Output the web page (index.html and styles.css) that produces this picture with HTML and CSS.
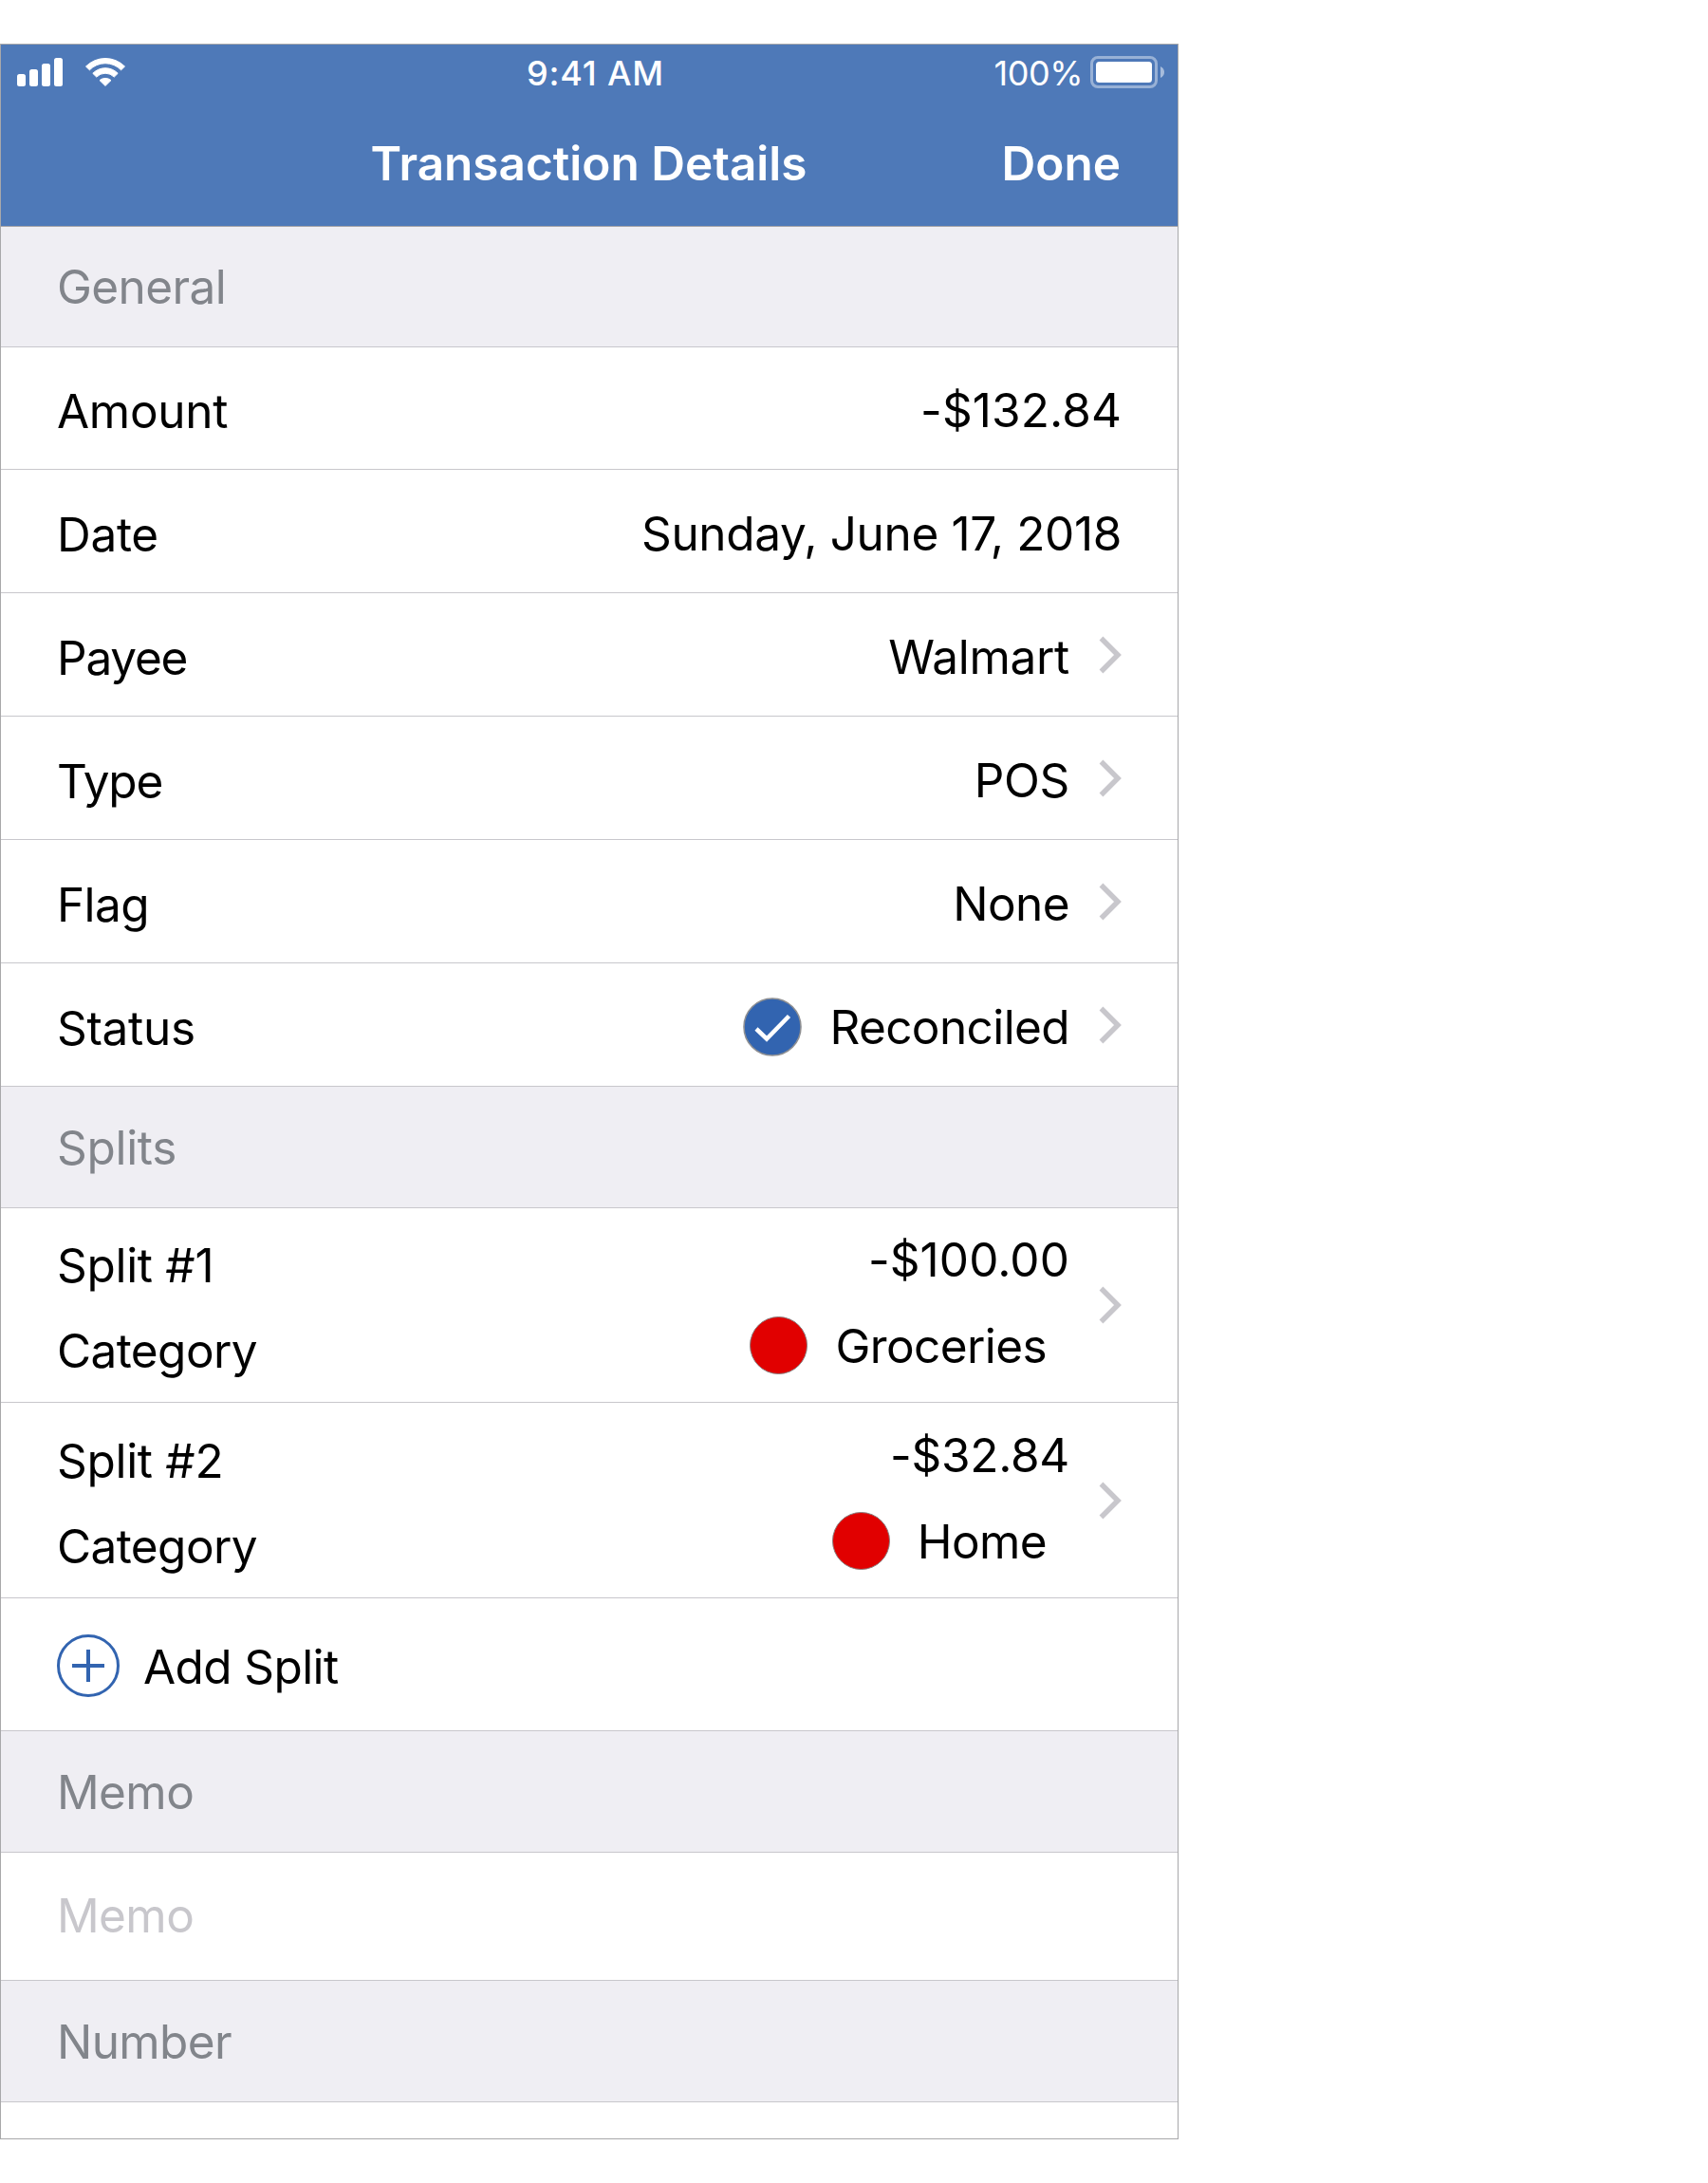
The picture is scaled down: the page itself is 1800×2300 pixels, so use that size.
FILE: index.html
```
<!DOCTYPE html>
<html lang="en">
<head>
    <meta charset="UTF-8">
    <meta name="viewport" content="width=device-width, initial-scale=1.0">
    <title>Transaction Details</title>
    <link rel="stylesheet" href="styles.css">
</head>
<body>
    <div class="phone">
        <header class="header">
            <div class="status-bar">
                <div class="status-left">
                    <svg width="49" height="30" viewBox="0 0 49 30" fill="currentColor">
                        <rect x="0" y="17" width="9" height="13" rx="2.5"></rect>
                        <rect x="13" y="12" width="9" height="18" rx="2.5"></rect>
                        <rect x="26" y="6" width="9" height="24" rx="2.5"></rect>
                        <rect x="39" y="0" width="9" height="30" rx="2.5"></rect>
                    </svg>
                    <svg width="42" height="30" viewBox="0 0 42 30" fill="currentColor" stroke="currentColor" stroke-width="1" stroke-linejoin="round">
                        <path d="M0.5 9 A29 29 0 0 1 41.5 9 L37.6 12.8 A23 23 0 0 0 4.4 12.8 Z"></path>
                        <path d="M7.8 16.3 A18.5 18.5 0 0 1 34.2 16.3 L30.3 20.1 A13 13 0 0 0 11.7 20.1 Z"></path>
                        <path d="M15 23.6 A9.4 9.4 0 0 1 27 23.6 L21 29.4 Z"></path>
                    </svg>
                </div>
                <div class="status-time">9:41 AM</div>
                <div class="status-right">
                    <span>100%</span>
                    <svg width="79" height="34" viewBox="0 0 79 34">
                        <rect x="1.5" y="1.5" width="68" height="31" rx="6.5" fill="none" stroke="#fff" stroke-opacity="0.42" stroke-width="3"></rect>
                        <rect x="6" y="6" width="59" height="22" rx="3.5" fill="#fff"></rect>
                        <path d="M74 11 Q78 13 78 17 Q78 21 74 23 Z" fill="#fff" fill-opacity="0.5"></path>
                    </svg>
                </div>
            </div>
            <div class="nav-bar">
                <h1>Transaction Details</h1>
                <a class="done">Done</a>
            </div>
        </header>

        <h2 class="section first tight">General</h2>
        <div class="row amount">
            <span class="label">Amount</span>
            <span class="value wide">-$132.84</span>
        </div>
        <div class="row">
            <span class="label">Date</span>
            <span class="value date">Sunday, June 17, 2018</span>
        </div>
        <div class="row">
            <span class="label tighter">Payee</span>
            <span class="value">Walmart</span>
            <svg class="chevron" viewBox="0 0 24 40"><path d="M2.5 2.5 L20 20 L2.5 37.5"></path></svg>
        </div>
        <div class="row">
            <span class="label tighter">Type</span>
            <span class="value">POS</span>
            <svg class="chevron" viewBox="0 0 24 40"><path d="M2.5 2.5 L20 20 L2.5 37.5"></path></svg>
        </div>
        <div class="row">
            <span class="label tight">Flag</span>
            <span class="value tight">None</span>
            <svg class="chevron" viewBox="0 0 24 40"><path d="M2.5 2.5 L20 20 L2.5 37.5"></path></svg>
        </div>
        <div class="row">
            <span class="label">Status</span>
            <span class="value tight">
                <svg class="check" width="62" height="62" viewBox="0 0 62 62">
                    <circle cx="31" cy="31" r="30" fill="#3264b0" stroke="#8f9093" stroke-width="1.6"></circle>
                    <path d="M14 33 L25 43.5 L48.5 19.5" fill="none" stroke="#fff" stroke-width="4.5"></path>
                </svg>
                Reconciled
            </span>
            <svg class="chevron" viewBox="0 0 24 40"><path d="M2.5 2.5 L20 20 L2.5 37.5"></path></svg>
        </div>

        <h2 class="section">Splits</h2>
        <div class="row split">
            <div class="split-labels">
                <span>Split #1</span>
                <span class="tight">Category</span>
            </div>
            <div class="split-values">
                <span class="wide">-$100.00</span>
                <span class="category tight"><i class="dot"></i>Groceries</span>
            </div>
            <svg class="chevron" viewBox="0 0 24 40"><path d="M2.5 2.5 L20 20 L2.5 37.5"></path></svg>
        </div>
        <div class="row split last">
            <div class="split-labels">
                <span>Split #2</span>
                <span class="tight">Category</span>
            </div>
            <div class="split-values">
                <span>-$32.84</span>
                <span class="category tight"><i class="dot"></i>Home</span>
            </div>
            <svg class="chevron" viewBox="0 0 24 40"><path d="M2.5 2.5 L20 20 L2.5 37.5"></path></svg>
        </div>
        <div class="row add-split">
            <svg class="plus" width="66" height="66" viewBox="0 0 66 66" fill="none" stroke="#3264b0">
                <circle cx="33" cy="33" r="31.5" stroke-width="3"></circle>
                <path d="M16 33 H50 M33 16 V50" stroke-width="4"></path>
            </svg>
            <span class="tight">Add Split</span>
        </div>

        <h2 class="section tight">Memo</h2>
        <div class="row memo">
            <span class="placeholder tight">Memo</span>
        </div>

        <h2 class="section tight">Number</h2>
        <div class="number"></div>
    </div>
</body>
</html>
```
FILE: styles.css
```
:root {
    --header-blue: #4e79b8;
    --section-gray: #efeef3;
    --section-text: #82858b;
    --line: #c8c7cc;
    --frame: #a8a8aa;
    --red: #e10000;
}

* {
    margin: 0;
    padding: 0;
    box-sizing: border-box;
}

body {
    font-family: Inter, "Liberation Sans", sans-serif;
    font-size: 49.5px;
    line-height: 60px;
    letter-spacing: -0.3px;
    color: #000;
    background: #fff;
    padding-top: 46px;
}

.phone {
    width: 1242px;
    height: 2208px;
    border: 1px solid var(--frame);
    overflow: hidden;
}

.tight {
    letter-spacing: -0.6px;
}

.tighter {
    letter-spacing: -1.2px;
}

.wide {
    letter-spacing: 0.1px;
}

/* Header */
.header {
    height: 192px;
    padding-top: 8px;
    background: var(--header-blue);
    border-bottom: 1px solid #a3a2a6;
    color: #fff;
}

.status-bar {
    height: 44px;
    padding: 0 13px 0 17px;
    display: grid;
    grid-template-columns: 1fr auto 1fr;
    font-size: 36px;
    line-height: 44px;
}

.status-left,
.status-right {
    display: flex;
    align-items: center;
}

.status-left {
    gap: 23px;
}

.status-left svg,
.status-right svg {
    margin-bottom: 2px;
}

.status-time {
    margin-left: 9px;
    font-weight: 500;
    letter-spacing: 0.8px;
}

.status-right {
    justify-content: flex-end;
    gap: 8px;
    letter-spacing: -0.5px;
}

.nav-bar {
    margin-top: 43px;
    padding: 0 60px 0 59px;
    display: grid;
    grid-template-columns: 1fr auto 1fr;
    font-weight: 600;
    letter-spacing: 0;
}

.nav-bar h1 {
    grid-column: 2;
    font-size: inherit;
    font-weight: 600;
}

.done {
    justify-self: end;
}

/* Sections and rows */
.section {
    height: 128px;
    padding: 0 59px 33px;
    display: flex;
    align-items: flex-end;
    background: var(--section-gray);
    border-bottom: 1px solid var(--line);
    color: var(--section-text);
    font-size: inherit;
    font-weight: 400;
}

.section.first {
    height: 127px;
}

.row {
    height: 130px;
    padding: 0 59px;
    display: flex;
    align-items: flex-end;
    border-bottom: 1px solid var(--line);
}

.row.amount {
    height: 129px;
}

.label {
    margin-bottom: 31px;
}

.value {
    height: 60px;
    margin-left: auto;
    margin-bottom: 32px;
    display: flex;
    align-items: center;
}

.date {
    letter-spacing: -0.35px;
}

.check {
    margin-right: 29px;
}

.chevron {
    width: 24px;
    height: 40px;
    margin-left: 31px;
    align-self: center;
    fill: none;
    stroke: var(--line);
    stroke-width: 5.5;
}

/* Splits */
.row.split {
    height: 205px;
}

.row.split.last {
    height: 206px;
}

.split-labels,
.split-values {
    display: flex;
    flex-direction: column;
}

.split-labels {
    gap: 30px;
    margin-bottom: 24px;
}

.split-values {
    gap: 31px;
    margin-left: auto;
    margin-bottom: 29px;
    align-items: flex-end;
}

.category {
    height: 60px;
    padding-right: 24px;
    display: flex;
    align-items: center;
}

.dot {
    width: 61px;
    height: 61px;
    margin: 0 29px 2px 0;
    background: var(--red);
    border: 1px solid #8a8080;
    border-radius: 50%;
}

.row.add-split {
    height: 140px;
    gap: 25px;
}

.plus {
    margin-bottom: 35px;
}

.add-split span {
    margin-bottom: 37px;
}

.row.memo {
    height: 135px;
}

.placeholder {
    margin-bottom: 38px;
    color: var(--line);
}

.number {
    height: 38px;
}
```
